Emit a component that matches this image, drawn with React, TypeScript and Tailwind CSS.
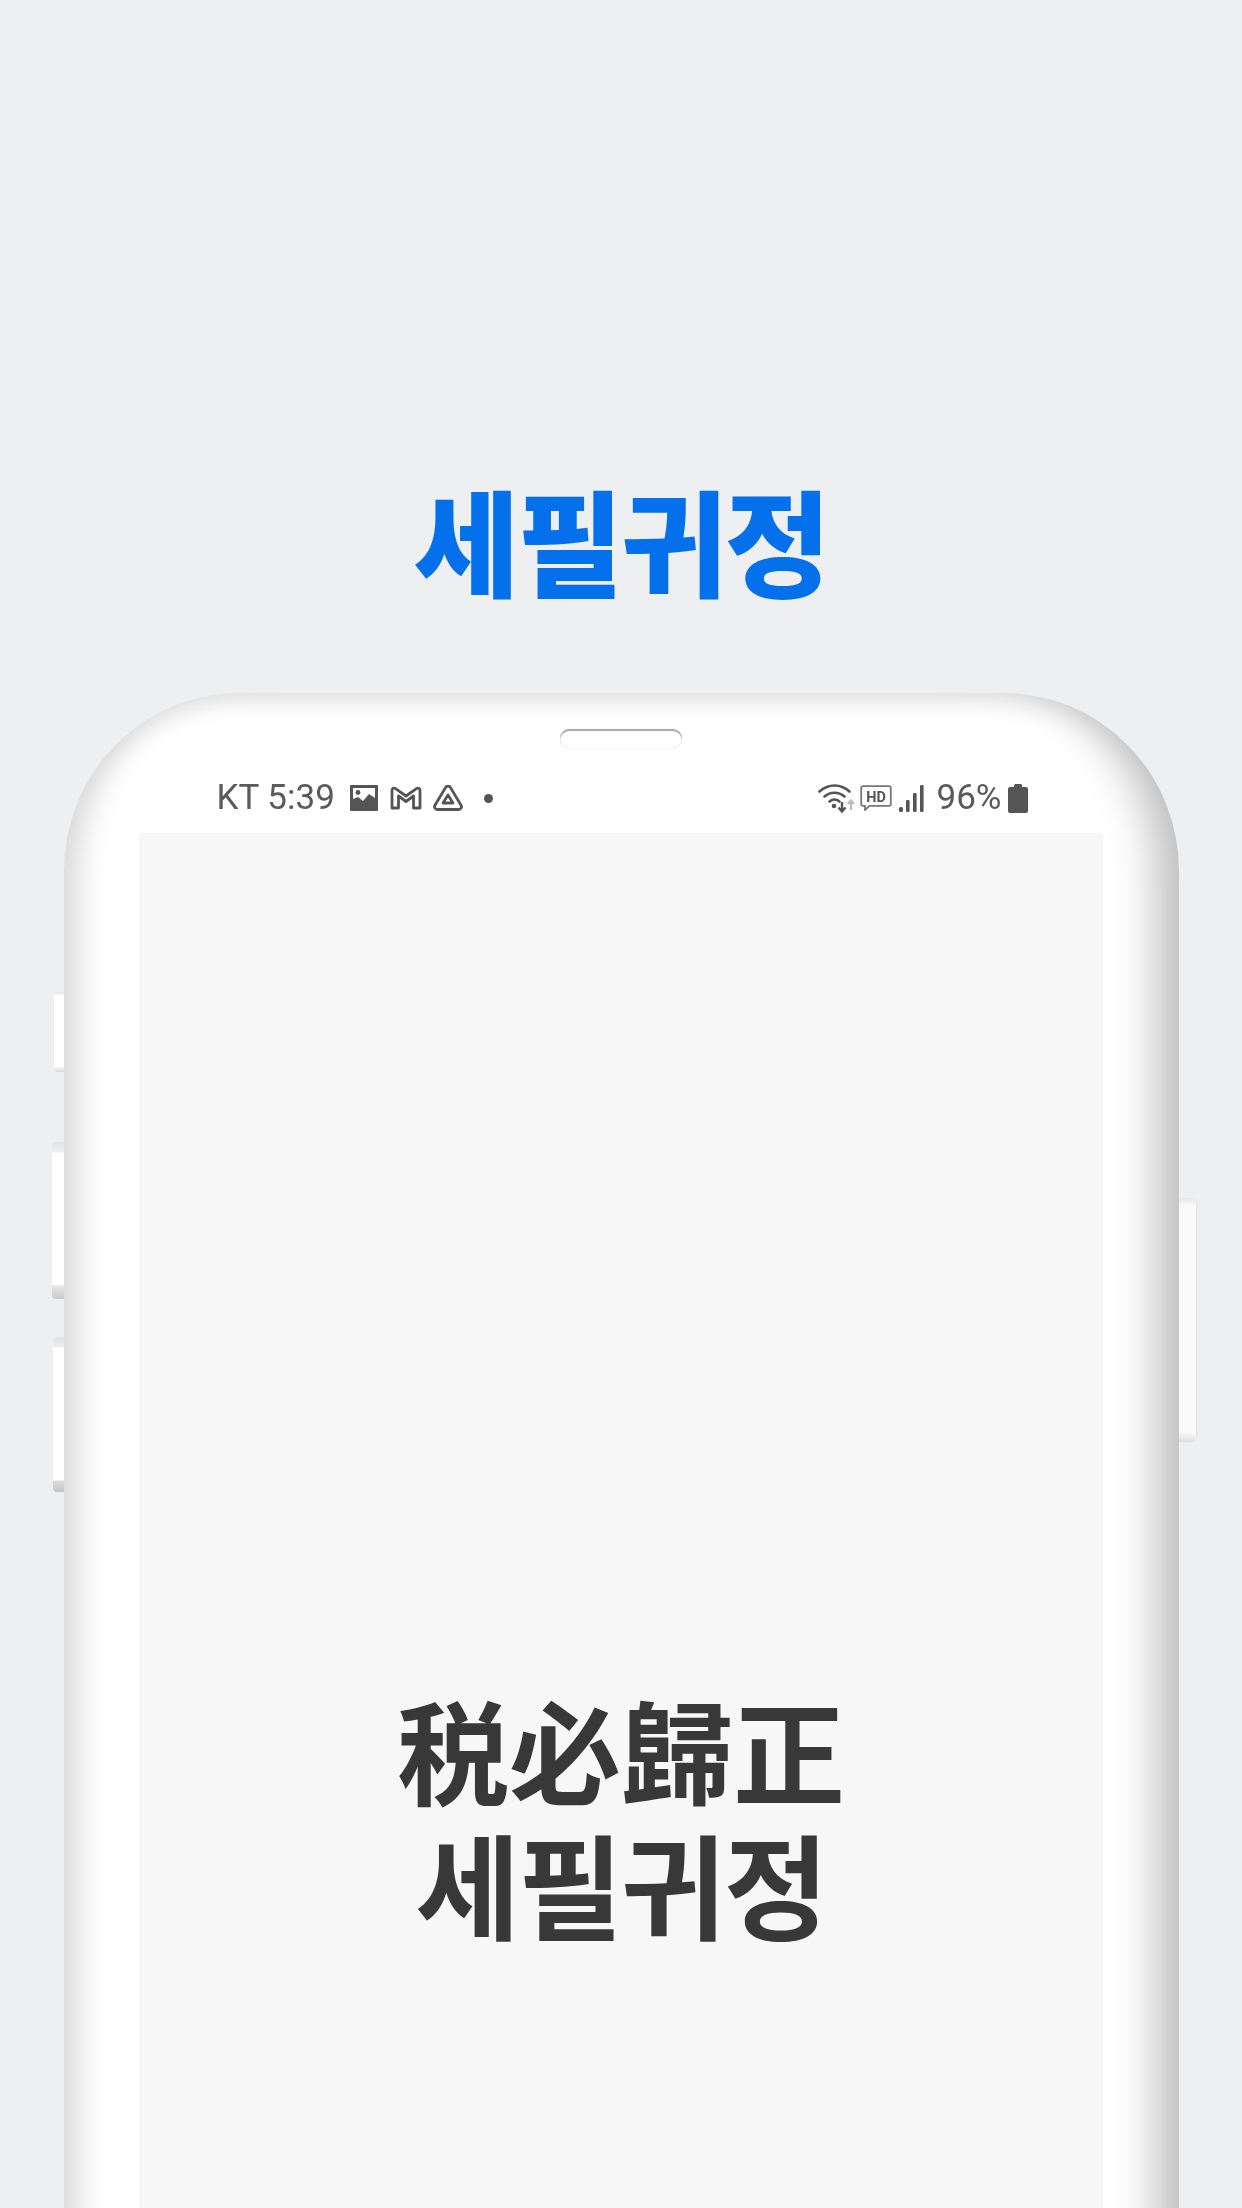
import React from "react";

const cjk = "font-['Noto_Sans_CJK_KR','Noto_Sans_CJK_SC',sans-serif]";

function ImageIcon() {
  return (
    <svg width="28" height="26" viewBox="0 0 28 26" className="ml-[15px]">
      <path
        fillRule="evenodd"
        fill="#555"
        d="M1 0h26a1 1 0 0 1 1 1v24a1 1 0 0 1-1 1H1a1 1 0 0 1-1-1V1a1 1 0 0 1 1-1zM3 3v11l5-2 5 4 6-7 6 4V3z"
      />
      <circle cx="8" cy="7.500" r="2.400" fill="#555" />
    </svg>
  );
}

function MailIcon() {
  return (
    <svg width="32" height="24" viewBox="0 0 32 24" className="ml-[12px]" fill="none">
      <path
        d="M2 22V4.500C2 2.500 4 1.400 5.600 2.600L16 10l10.400-7.400C28 1.400 30 2.500 30 4.500V22h-6.500V10L16 15.500 8.500 10v12z"
        stroke="#555"
        strokeWidth="2.800"
        strokeLinejoin="round"
      />
    </svg>
  );
}

function DriveIcon() {
  return (
    <svg width="30" height="26" viewBox="0 0 30 26" className="ml-[11px]" fill="none">
      <path
        d="M12.600 2.400a2.800 2.800 0 0 1 4.800 0l10.600 17.800A2.800 2.800 0 0 1 25.600 24.500H4.400A2.800 2.800 0 0 1 2 20.200z"
        stroke="#555"
        strokeWidth="2.800"
        strokeLinejoin="round"
      />
      <path d="M15 10l5 8H10z" stroke="#555" strokeWidth="2.800" strokeLinejoin="round" />
    </svg>
  );
}

function WifiIcon() {
  return (
    <svg width="38" height="30" viewBox="0 0 38 30" fill="none">
      <path d="M1.500 8.500C10.500 0.500 22.500 0.500 31.500 8.500" stroke="#555" strokeWidth="2.600" strokeLinecap="round" />
      <path d="M6.500 13.500C12.500 8.500 20.500 8.500 26.500 13.500" stroke="#555" strokeWidth="2.600" strokeLinecap="round" />
      <path d="M11.500 18.500C14.500 16 18.500 16 21.500 18.500" stroke="#555" strokeWidth="2.600" strokeLinecap="round" />
      <circle cx="16" cy="23" r="2.300" fill="#555" />
      <path d="M24 19v9M20.500 24.500L24 28.500l3.500-4" stroke="#555" strokeWidth="2.400" />
      <path d="M33 27v-9M30 21l3-3.500 3 3.500" stroke="#bbb" strokeWidth="2.200" />
    </svg>
  );
}

function HdIcon() {
  return (
    <svg width="32" height="26" viewBox="0 0 32 26" className="ml-[4px]" fill="none">
      <path
        d="M3 1.200h26a1.800 1.800 0 0 1 1.800 1.800v16a1.800 1.800 0 0 1-1.800 1.800H9.500L5 25v-4.200H3A1.800 1.800 0 0 1 1.200 19V3A1.800 1.800 0 0 1 3 1.200z"
        stroke="#777"
        strokeWidth="1.800"
      />
      <text x="16" y="16.500" textAnchor="middle" fontSize="14.500" fontWeight="700" fill="#555" fontFamily="Roboto, sans-serif">
        HD
      </text>
    </svg>
  );
}

function SignalIcon() {
  return (
    <svg width="26" height="27" viewBox="0 0 26 27" className="ml-[7px]">
      <rect x="0" y="22" width="4" height="5" rx="1.500" fill="#555" />
      <rect x="7" y="15" width="3.600" height="12" rx="1.200" fill="#555" />
      <rect x="14" y="8" width="3.600" height="19" rx="1.200" fill="#555" />
      <rect x="21" y="0" width="3.600" height="27" rx="1.200" fill="#555" />
    </svg>
  );
}

function BatteryIcon() {
  return (
    <svg width="20" height="29" viewBox="0 0 20 29" className="ml-[6px]">
      <path
        fill="#555"
        d="M6 1.500A1.500 1.500 0 0 1 7.500 0h5A1.500 1.500 0 0 1 14 1.500V3h4a2 2 0 0 1 2 2v22a2 2 0 0 1-2 2H2a2 2 0 0 1-2-2V5a2 2 0 0 1 2-2h4z"
      />
    </svg>
  );
}

export default function App() {
  return (
    <div className="w-[1242px] h-[2208px] overflow-hidden bg-[#edeff1] flex flex-col items-center">
      <h1 className={`${cjk} mt-[470px] h-[223px] shrink-0 text-[115px] leading-[136px] font-black text-[#0570eb] tracking-[-2px]`}>
        세필귀정
      </h1>

      <div className="relative w-[1115px] h-[1600px] shrink-0">
        {/* side buttons */}
        <div className="absolute left-[-10px] top-[299px] w-[11px] h-[80px] rounded-l-[3px] bg-[linear-gradient(to_bottom,#e4e4e4_0px,#ffffff_4px,#ffffff_74px,#d8d8d8_80px)]" />
        <div className="absolute left-[-12px] top-[449px] w-[13px] h-[157px] rounded-l-[4px] bg-[linear-gradient(to_bottom,#e2e2e2_0px,#eeeeee_10px,#ffffff_11px,#ffffff_142px,#e8e8e8_144px,#c8c8c8_157px)]" />
        <div className="absolute left-[-11px] top-[644px] w-[12px] h-[155px] rounded-l-[4px] bg-[linear-gradient(to_bottom,#e2e2e2_0px,#eeeeee_10px,#ffffff_11px,#ffffff_143px,#dcdcdc_144px,#c4c4c4_155px)]" />
        <div className="absolute right-[-17px] top-[505px] w-[18px] h-[244px] rounded-r-[6px] bg-[linear-gradient(to_bottom,#e6e6e6_0px,#fafafa_8px,#fafafa_234px,#dedede_244px)] shadow-[1px_0_1px_#e2e4e6]" />

        {/* phone body */}
        <div className="relative flex flex-col items-center w-full h-full bg-white rounded-tl-[175px_178px] rounded-tr-[175px_178px] shadow-[inset_38px_0_30px_-24px_#d8d8d8,inset_-50px_0_44px_-28px_#bdbdbd,inset_0_26px_24px_-18px_#e4e4e4]">
          <div className="mt-[36px] w-[122px] h-[19px] shrink-0 rounded-full bg-white shadow-[inset_0_2px_1px_#a8a8a8,0_0_1px_#b0b0b0]" />

          <div className="mt-[30px] w-full h-[55px] shrink-0 pl-[153px] pr-[151px] flex items-start justify-between font-['Roboto',sans-serif] text-[35px] leading-[40px] text-[#5a5a5a] blur-[0.5px]">
            <div className="flex items-center h-[40px]">
              <span>KT 5:39</span>
              <ImageIcon />
              <MailIcon />
              <DriveIcon />
              <span className="ml-[21px] w-[9px] h-[9px] rounded-full bg-[#555]" />
            </div>
            <div className="flex items-center h-[40px]">
              <WifiIcon />
              <HdIcon />
              <SignalIcon />
              <span className="ml-[12px]">96%</span>
              <BatteryIcon />
            </div>
          </div>

          <div className="w-[964px] flex-1 bg-[#f7f7f8] flex flex-col items-center pt-[849px]">
            <p className={`${cjk} text-[112px] leading-[133px] font-bold text-[#383838]`}>税必歸正</p>
            <p className={`${cjk} text-[114px] leading-[133px] font-bold text-[#383838] tracking-[-2px]`}>세필귀정</p>
          </div>
        </div>
      </div>
    </div>
  );
}
